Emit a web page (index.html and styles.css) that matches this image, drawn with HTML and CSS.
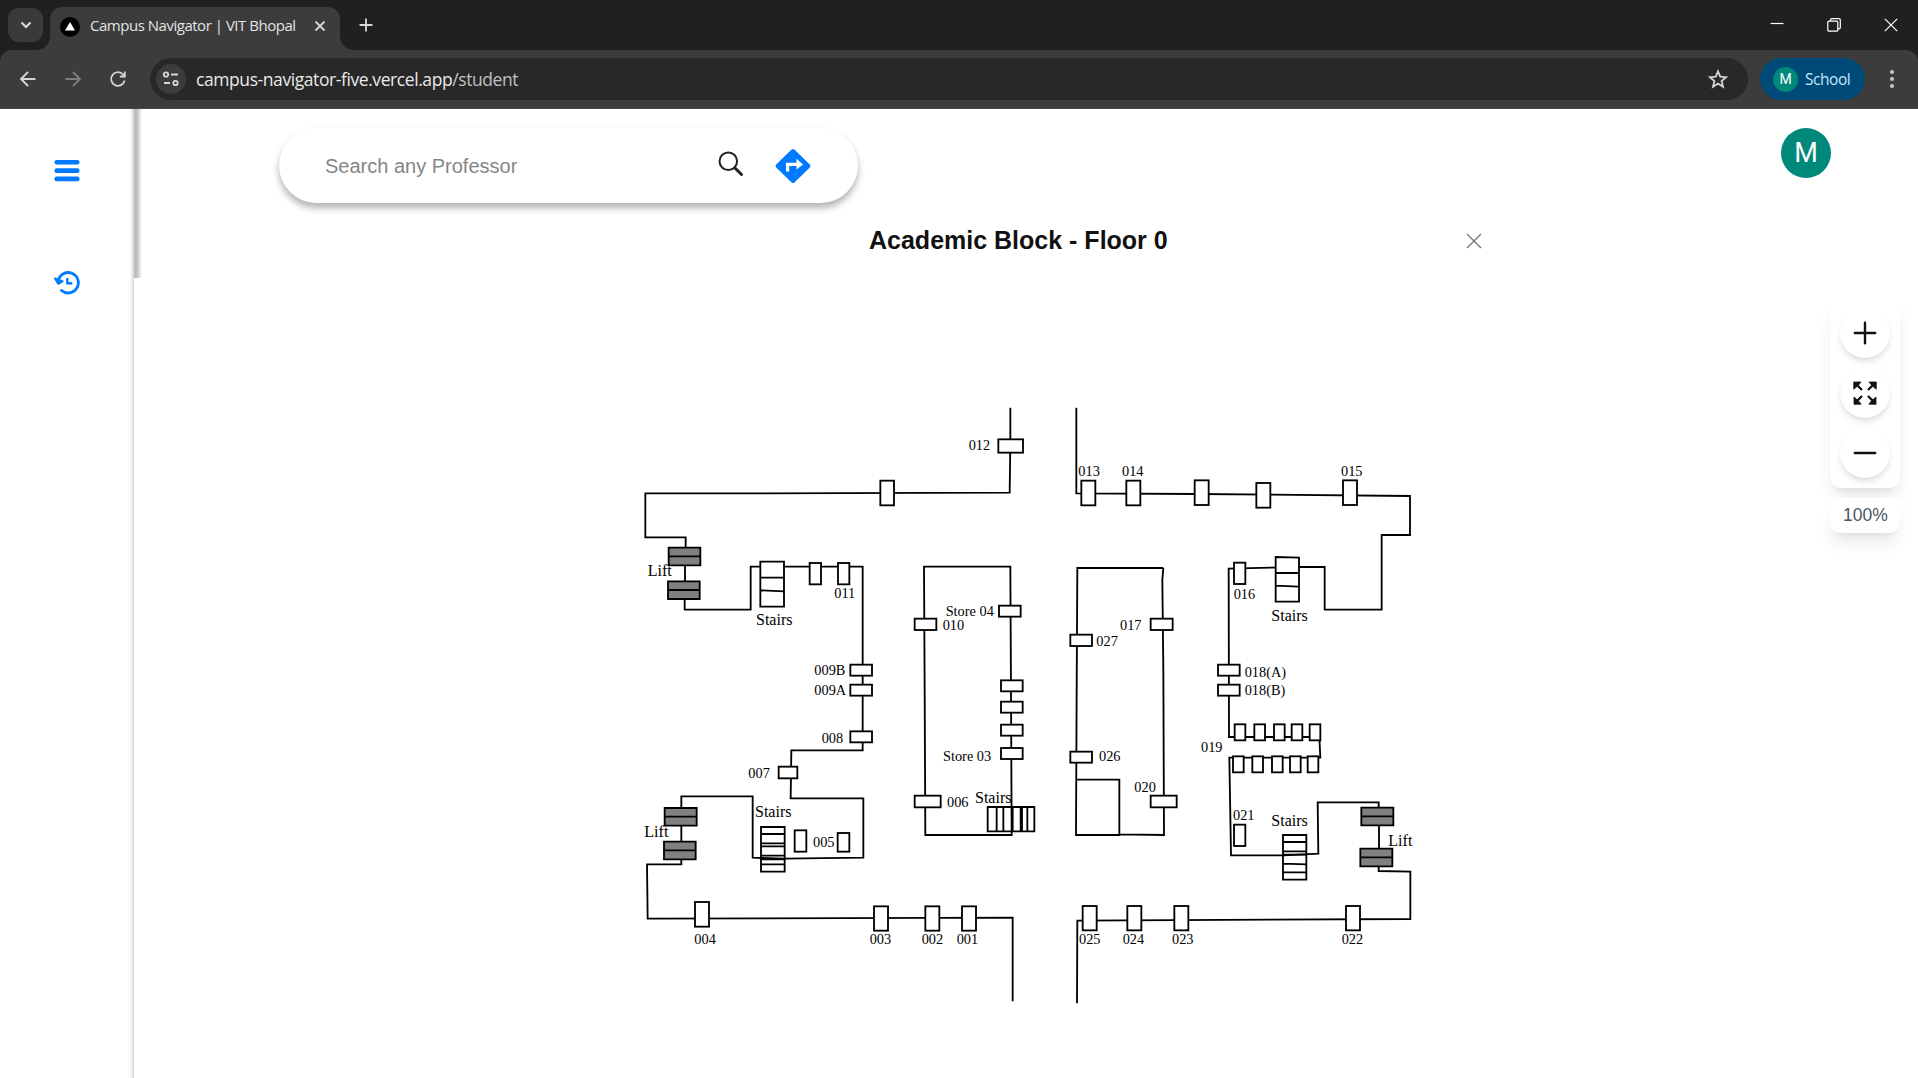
FILE: index.html
```html
<!DOCTYPE html>
<html lang="en">
<head>
<meta charset="utf-8">
<title>Campus Navigator | VIT Bhopal</title>
<link rel="stylesheet" href="styles.css">
</head>
<body>
<header class="browser">
  <div class="tabstrip">
    <div class="tab-search"><svg width="14" height="10" viewBox="0 0 14 10"><path d="M2.500 2.500L7 7l4.500-4.500"/></svg></div>
    <div class="tab">
      <svg class="favicon" width="20" height="20" viewBox="0 0 20 20"><circle cx="10" cy="10" r="10" fill="#000"/><path d="M10 5l5 8.6H5z" fill="#fff"/></svg>
      <span class="tab-title">Campus Navigator | VIT Bhopal</span>
      <svg class="tab-close" width="12" height="12" viewBox="0 0 12 12"><path d="M1.500 1.500l9 9M10.500 1.500l-9 9"/></svg>
    </div>
    <svg class="new-tab" width="14" height="14" viewBox="0 0 14 14"><path d="M7 .5v13M.5 7h13"/></svg>
    <div class="window-controls">
      <svg width="14" height="14" viewBox="0 0 14 14"><path d="M.5 5.500h13"/></svg>
      <svg width="14" height="14" viewBox="0 0 14 14"><rect x=".8" y="3.200" width="10" height="10" rx="1"/><path d="M3.500 3V2a1.300 1.300 0 0 1 1.300-1.300H12A1.300 1.300 0 0 1 13.300 2v7.500a1.300 1.300 0 0 1-1.300 1.300h-1"/></svg>
      <svg width="14" height="14" viewBox="0 0 14 14"><path d="M.8.8l12.400 12.400M13.200.8L.8 13.200"/></svg>
    </div>
  </div>
  <div class="toolbar">
    <div class="nav-buttons">
      <svg width="18" height="18" viewBox="0 0 18 18"><path d="M16.500 9H2.500M9 2L2 9l7 7"/></svg>
      <svg class="disabled" width="18" height="18" viewBox="0 0 18 18"><path d="M1.500 9h14M9 2l7 7-7 7"/></svg>
      <svg width="18" height="18" viewBox="0 0 18 18"><path d="M15.600 10.500A6.800 6.800 0 1 1 14.300 4.800L15.500 6.300M15.800 1.500v5h-5"/></svg>
    </div>
    <div class="address">
      <div class="site-info"><svg width="18" height="16" viewBox="0 0 18 16"><circle cx="4" cy="3.500" r="2.200"/><path d="M9 3.500h7M2 12h6"/><circle cx="13.500" cy="12" r="2.200"/></svg></div>
      <span class="url">campus-navigator-five.vercel.app<span class="path">/student</span></span>
      <svg class="star" width="20" height="20" viewBox="0 0 20 20"><path d="M10 2.300l2.200 5.400 5.900.5-4.500 3.800 1.400 5.700-5-3.100-5 3.100L6.400 12 1.900 8.200l5.900-.5z"/></svg>
    </div>
    <div class="profile"><span class="profile-avatar">M</span><span class="profile-name">School</span></div>
    <svg class="menu" width="6" height="20" viewBox="0 0 6 20"><circle cx="3" cy="3" r="2"/><circle cx="3" cy="10" r="2"/><circle cx="3" cy="17" r="2"/></svg>
  </div>
</header>

<div class="app">
  <aside class="sidebar">
    <svg class="hamburger" width="26" height="22" viewBox="0 0 26 22"><rect x=".5" y="0" width="25" height="4.600" rx="2"/><rect x=".5" y="8.300" width="25" height="4.600" rx="2"/><rect x=".5" y="16.600" width="25" height="4.600" rx="2"/></svg>
    <svg class="history" width="26" height="24" viewBox="0 0 26 24"><path d="M4.200 9.500A10.200 10.200 0 1 1 7.500 19.500"/><path class="hands" d="M13.300 7v5.300h5"/><path class="solid" d="M1 7.500L8.500 10.300 4.200 12.800z"/></svg>
  </aside>
  <main class="content">
    <div class="topbar">
      <div class="search">
        <span class="placeholder">Search any Professor</span>
        <svg class="magnifier" width="26" height="26" viewBox="0 0 26 26"><circle cx="10.300" cy="10.300" r="8.800"/><path class="handle" d="M17 17l6.500 6.500"/></svg>
        <svg class="directions" width="36" height="34" viewBox="0 0 36 34"><path d="M16.600.6Q18-.6 19.400.6L34.800 15.600Q36 17 34.800 18.400L19.400 33.400Q18 34.600 16.600 33.400L1.200 18.400Q0 17 1.200 15.600z" fill="#007bff"/><path d="M12.600 22.500V15.400H22" fill="none" stroke="#fff" stroke-width="3.200"/><path d="M21.500 9.800l6.500 5.600-6.500 5.200z" fill="#fff"/></svg>
      </div>
      <div class="avatar">M</div>
    </div>
    <div class="title-row">
      <h1>Academic Block - Floor 0</h1>
      <svg class="close" width="16" height="16" viewBox="0 0 16 16"><path d="M1 1l14 14M15 1L1 15"/></svg>
    </div>
    <div class="stage">
      <svg class="plan" width="800" height="620" viewBox="0 0 2400 1860">
        <g class="wall">
          <path d="M1141 53V160L1139 308 400 310H46V442H167V475M165 525V575M164 625V659H362V530H698V1081H484L482 1225H700V1403L463 1406 368 1403V1219H154V1255M154 1305V1357M154 1407V1423H51L53 1586 1148 1583V1834"/>
          <path d="M882 530H1141L1143 900 1145 1335H886L884 900z"/>
          <path d="M1339 53V310L1700 312 2340 318V435H2255V659H2084V531H2000L1796 536 1797 1041H2068L2071 1103H1798L1803 1396H1960L2065 1391 2063 1237H2246V1255M2247 1305V1378M2246 1428V1443L2341 1445V1587L1342 1592 1341 1840"/>
          <path d="M1600 534H1342L1340 900 1338 1335H1468V1169H1338M1468 1333L1602 1335 1600 840 1597 570 1600 534"/>
        </g>
        <g class="door">
          <rect x="1105" y="148" width="74" height="40"/><rect x="751" y="272" width="41" height="74"/>
          <rect x="539" y="519" width="34" height="64"/><rect x="624" y="519" width="34" height="64"/>
          <rect x="661" y="824" width="65" height="33"/><rect x="661" y="884" width="65" height="33"/><rect x="661" y="1024" width="65" height="33"/>
          <rect x="446" y="1130" width="56" height="35"/><rect x="854" y="686" width="65" height="34"/><rect x="1107" y="647" width="65" height="33"/>
          <rect x="1113" y="871" width="65" height="33"/><rect x="1113" y="935" width="65" height="33"/><rect x="1113" y="1004" width="65" height="33"/><rect x="1113" y="1074" width="65" height="33"/>
          <rect x="854" y="1217" width="78" height="35"/><rect x="494" y="1321" width="35" height="64"/><rect x="623" y="1329" width="35" height="56"/>
          <rect x="195" y="1536" width="42" height="74"/><rect x="732" y="1549" width="42" height="73"/><rect x="886" y="1549" width="42" height="73"/><rect x="996" y="1549" width="42" height="73"/>
          <rect x="1354" y="272" width="42" height="74"/><rect x="1489" y="272" width="42" height="74"/><rect x="1694" y="271" width="42" height="74"/><rect x="1879" y="279" width="42" height="74"/><rect x="2139" y="271" width="42" height="74"/>
          <rect x="1812" y="518" width="34" height="64"/><rect x="1562" y="686" width="66" height="34"/><rect x="1321" y="734" width="65" height="34"/>
          <rect x="1764" y="824" width="65" height="33"/><rect x="1764" y="884" width="65" height="33"/><rect x="1321" y="1085" width="65" height="33"/><rect x="1562" y="1217" width="78" height="35"/>
          <rect x="1814" y="1003" width="32" height="48"/><rect x="1873" y="1003" width="32" height="48"/><rect x="1932" y="1003" width="32" height="48"/><rect x="1985" y="1003" width="32" height="48"/><rect x="2039" y="1003" width="32" height="48"/>
          <rect x="1809" y="1099" width="32" height="48"/><rect x="1867" y="1099" width="32" height="48"/><rect x="1926" y="1099" width="32" height="48"/><rect x="1980" y="1099" width="32" height="48"/><rect x="2033" y="1099" width="32" height="48"/>
          <rect x="1812" y="1304" width="34" height="64"/>
          <rect x="1358" y="1548" width="42" height="73"/><rect x="1492" y="1548" width="42" height="73"/><rect x="1633" y="1548" width="42" height="73"/><rect x="2148" y="1548" width="42" height="73"/>
        </g>
        <g class="stairs">
          <path class="solid" d="M391 515H462V650H391zM391 563H462M391 601L462 604"/>
          <path class="solid" d="M1937 501L2007 503V635H1937zM1937 549H2007M1937 587L2007 590"/>
          <path d="M393 1311H464V1445H393zM393 1332H464M393 1360H464M393 1369H464M393 1397H464M393 1408H464M393 1423H464"/>
          <path d="M1959 1335H2029V1469H1959zM1959 1356H2029M1959 1384H2029M1959 1394H2029M1959 1421L2029 1423M1959 1447H2029"/>
          <path d="M1073 1251H1213V1324H1073zM1100 1251V1324M1120 1251V1324M1148 1251V1324M1172 1251V1324M1176 1252V1324M1192 1251V1324"/>
        </g>
        <g class="lift">
          <path d="M116 473H211V526H116zM116 499H211M114 574H209V627H114zM114 600H209"/>
          <path d="M104 1254H200V1307H104zM104 1280H200M102 1355H197V1408H102zM102 1381H197"/>
          <path d="M2194 1253H2290V1306H2194zM2194 1279H2290M2191 1376H2287V1429H2191zM2191 1402H2287"/>
        </g>
        <g class="room">
          <text x="1016" y="180">012</text><text x="613" y="624">011</text><text x="947" y="678">Store 04</text><text x="938" y="720">010</text>
          <text x="553" y="855">009B</text><text x="553" y="914">009A</text><text x="575" y="1059">008</text><text x="355" y="1164">007</text>
          <text x="939" y="1113">Store 03</text><text x="951" y="1251">006</text><text x="549" y="1371">005</text>
          <text x="193" y="1662">004</text><text x="719" y="1662">003</text><text x="875" y="1662">002</text><text x="980" y="1662">001</text>
          <text x="1345" y="258">013</text><text x="1476" y="258">014</text><text x="2133" y="258">015</text><text x="1811" y="627">016</text>
          <text x="1470" y="720">017</text><text x="1399" y="768">027</text><text x="1844" y="862">018(A)</text><text x="1844" y="916">018(B)</text>
          <text x="1407" y="1113">026</text><text x="1713" y="1086">019</text><text x="1513" y="1206">020</text><text x="1809" y="1291">021</text>
          <text x="1347" y="1662">025</text><text x="1478" y="1662">024</text><text x="1626" y="1662">023</text><text x="2135" y="1662">022</text>
        </g>
        <g class="place">
          <text x="53" y="557">Lift</text><text x="43" y="1340">Lift</text><text x="2275" y="1368">Lift</text>
          <text x="378" y="706">Stairs</text><text x="1924" y="694">Stairs</text><text x="375" y="1281">Stairs</text><text x="1035" y="1239">Stairs</text><text x="1924" y="1308">Stairs</text>
        </g>
      </svg>
    </div>
    <div class="zoom">
      <div class="zoom-panel">
        <div class="zoom-button"><svg width="24" height="24" viewBox="0 0 24 24"><path d="M12 1.800v20.400M1.800 12h20.400"/></svg></div>
        <div class="zoom-button"><svg width="24" height="24" viewBox="0 0 24 24"><g class="heads"><path d="M1 1H8L6 3.500 3.500 6 1 8z"/><path d="M23 1H16l2 2.500L20.500 6 23 8z"/><path d="M1 23V16l2.500 2L6 20.500 8 23z"/><path d="M23 23V16l-2.500 2-2.500 2.500L16 23z"/></g><path class="shafts" d="M3 3l6 6M21 3l-6 6M3 21l6-6M21 21l-6-6"/></svg></div>
        <div class="zoom-button"><svg width="24" height="24" viewBox="0 0 24 24"><path d="M1.800 12h20.400"/></svg></div>
      </div>
      <div class="zoom-level">100%</div>
    </div>
  </main>
</div>
</body>
</html>
```
FILE: styles.css
```css
* { box-sizing: border-box; }
body { margin: 0; width: 1918px; height: 1078px; overflow: hidden; display: flex; flex-direction: column; background: #fff; font-family: "Liberation Sans", Arial, sans-serif; }
svg { display: block; flex: none; }

/* Browser frame */
.browser { font-family: "Open Sans", "Noto Sans", sans-serif; background: #1f2120; flex: none; }
.browser svg { fill: none; stroke: #d6d6d6; stroke-width: 1.8; }
.tabstrip { height: 50px; display: flex; align-items: flex-start; padding-left: 8px; }
.tab-search { width: 35px; height: 34px; margin-top: 8px; border-radius: 11px; background: #3a3a3a; display: flex; align-items: center; justify-content: center; }
.browser .tab-search svg { stroke-width: 2.200; }
.tab { position: relative; width: 290px; height: 43px; margin: 7px 0 0 7px; background: #3c3c3c; border-radius: 12px 12px 0 0; display: flex; align-items: center; padding: 0 14px 6px 10px; }
.tab::before, .tab::after { content: ""; position: absolute; bottom: 0; width: 13px; height: 13px; }
.tab::before { left: -13px; background: radial-gradient(circle at 0 0, transparent 12.5px, #3c3c3c 13px); }
.tab::after { right: -13px; background: radial-gradient(circle at 100% 0, transparent 12.5px, #3c3c3c 13px); }
.browser .favicon { stroke: none; margin-top: 2px; }
.tab-title { margin-left: 10px; margin-top: -1px; flex: 1; font-size: 15px; letter-spacing: -.48px; color: #e3e3e3; white-space: nowrap; }
.new-tab { margin: 18px 0 0 19px; }
.window-controls { margin-left: auto; padding: 18px 20px 0 0; display: flex; gap: 43px; }
.browser .window-controls svg { stroke: #fff; stroke-width: 1.2; }
.toolbar { height: 59px; background: #3c3c3c; border-bottom: 1px solid #474545; border-radius: 12px 12px 0 0; display: flex; align-items: center; padding-left: 19px; }
.nav-buttons { display: flex; gap: 27px; }
.browser .nav-buttons .disabled { stroke: #7d7d7d; }
.address { width: 1598px; height: 42px; margin-left: 23px; border-radius: 21px; background: #282828; display: flex; align-items: center; padding: 0 20px 0 6px; }
.site-info { width: 30px; height: 30px; border-radius: 50%; background: #3c3c3c; display: flex; align-items: center; justify-content: center; }
.url { flex: 1; margin-left: 10px; font-size: 17.500px; letter-spacing: -.42px; color: #e8e8e8; }
.path { color: #c0c0c0; }
.profile { width: 105px; height: 42px; margin-left: 12px; border-radius: 21px; background: #004a77; display: flex; align-items: center; padding-left: 13px; gap: 7px; color: #c2e7ff; font-size: 15.500px; letter-spacing: -.45px; }
.profile-avatar { width: 25px; height: 25px; border-radius: 50%; background: #00897b; color: #fff; font: 14px/25px Roboto, sans-serif; text-align: center; }
.browser .toolbar .menu { margin-left: 24px; fill: #c7c7c7; stroke: none; }

/* Application */
.app { flex: 1; display: flex; min-height: 0; }
.sidebar { position: relative; width: 134px; background: linear-gradient(90deg, #fff 130px, #d5d5d5 134px); padding: 51px 0 0 54px; display: flex; flex-direction: column; gap: 89px; }
.sidebar::after { content: ""; position: absolute; left: 134px; top: 0; width: 8px; height: 169px; background: linear-gradient(90deg, #bdbdbd 0, #c0c0c0 38%, #fff 100%); }
.hamburger { fill: #007bff; }
.history { fill: none; stroke: #007bff; stroke-width: 2.800; stroke-linecap: round; }
.history .hands { stroke-width: 2.400; stroke-linecap: butt; }
.history .solid { fill: #007bff; stroke-width: 2; stroke-linejoin: round; }
.content { position: relative; flex: 1; padding: 19px 0 0 145px; }
.topbar { display: flex; align-items: flex-start; justify-content: space-between; padding-right: 87px; }
.search { width: 579px; height: 75px; border-radius: 38px; background: #fff; box-shadow: 0 5px 7px rgba(0,0,0,.3); display: flex; align-items: center; padding: 0 47px 0 46px; }
.placeholder { flex: 1; padding-top: 1px; font-size: 20px; line-height: 24px; color: #868686; }
.magnifier { margin-right: 31px; margin-top: -3px; fill: none; stroke: #222; stroke-width: 2; }
.magnifier .handle { stroke-width: 3; stroke-linecap: round; }
.avatar { width: 50px; height: 50px; border-radius: 50%; background: #00897b; color: #fff; font: 27px/51px Roboto, sans-serif; text-align: center; }
.title-row { height: 30px; margin: 23px 0 0 590px; display: flex; align-items: center; gap: 298px; }
h1 { margin: -2px 0 0; font-size: 25px; line-height: 30px; color: #111; white-space: nowrap; }
.close { stroke: #6b7280; stroke-width: 1.300; }
.stage { margin: 134px 0 0 351px; }
.plan path, .plan rect { stroke: #000; stroke-width: 5.500; }
.wall path { fill: none; }
.door rect { fill: #fff; }
.stairs path { fill: none; }
.stairs .solid { fill: #fff; }
.lift path { fill: #808080; }
.plan text { font-family: "Liberation Serif", "Times New Roman", serif; font-size: 43px; fill: #000; }
.plan .place text { font-size: 48px; }
.zoom { position: absolute; top: 189px; right: 18px; width: 70px; display: flex; flex-direction: column; gap: 10px; }
.zoom-panel, .zoom-level { background: #fff; border-radius: 10px; box-shadow: 0 12px 19px -4px rgba(0,0,0,.1), 0 5px 7px -5px rgba(0,0,0,.1); }
.zoom-panel { padding: 10px; display: flex; flex-direction: column; gap: 10px; }
.zoom-button { width: 50px; height: 50px; border-radius: 50%; background: #fff; box-shadow: 0 5px 7px -1px rgba(0,0,0,.1), 0 2px 5px -2px rgba(0,0,0,.1); display: flex; align-items: center; justify-content: center; }
.zoom-button svg { stroke: #111; stroke-width: 2.400; stroke-linecap: round; }
.zoom-button .heads { fill: #111; stroke-width: .8; stroke-linejoin: round; }
.zoom-button .shafts { stroke-width: 2.300; stroke-linecap: butt; }
.zoom-level { height: 35px; line-height: 35px; padding-left: 1px; text-align: center; font-size: 17.500px; color: #4b5563; }
```
